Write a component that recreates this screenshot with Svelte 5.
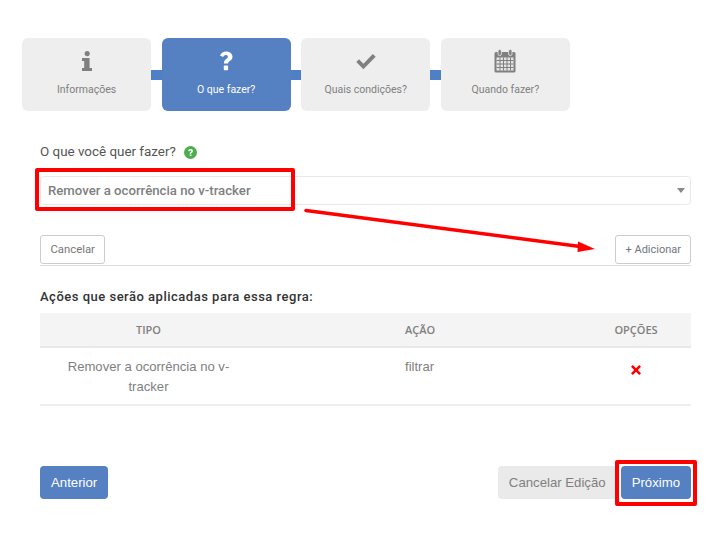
<script>
  const steps = [
    { label: 'Informações', icon: 'info' },
    { label: 'O que fazer?', icon: 'q', active: true },
    { label: 'Quais condições?', icon: 'check' },
    { label: 'Quando fazer?', icon: 'cal' }
  ];
</script>

<div class="page">
  <nav class="steps">
    {#each steps as s, i}
      {#if i > 0}<span class="link"></span>{/if}
      <div class="step" class:active={s.active}>
        <div class="ico">
          {#if s.icon === 'info'}
            <svg width="12" height="20" viewBox="0 0 12 20"><circle cx="6.200" cy="2.600" r="2.600" fill="#808080"/><path d="M1 7h7.600v10H11v3H1v-3h2.200v-7H1z" fill="#808080"/></svg>
          {:else if s.icon === 'q'}
            <svg width="14" height="20" viewBox="0 0 14 20"><path d="M1 4.600C2.200 1.800 4.300.4 7.200.4c3.500 0 6.300 2.200 6.300 5.300 0 2.300-1.300 3.400-2.700 4.400-1.100.8-1.700 1.300-1.700 2.500H4.900c0-2.600 1-3.700 2.300-4.600.9-.6 1.700-1.100 1.700-2.200 0-1-.9-1.700-2-1.700-1.200 0-2 .7-2.700 1.900z" fill="#fff"/><rect x="4.800" y="14.600" width="4.300" height="4.600" rx=".6" fill="#fff"/></svg>
          {:else if s.icon === 'check'}
            <svg width="20" height="17" viewBox="0 0 20 16"><path d="M.3 8.600 3 5.800l4.400 4.400L16.800.4l2.900 2.900L7.400 15.800z" fill="#808080"/></svg>
          {:else}
            <svg width="22" height="24" viewBox="0 0 22 24"><rect x="0.500" y="3" width="21" height="20.500" rx="1.500" fill="#808080"/><rect x="4" y="0.500" width="3.400" height="6" rx="1.500" fill="#808080" stroke="#eee" stroke-width=".8"/><rect x="14.600" y="0.500" width="3.400" height="6" rx="1.500" fill="#808080" stroke="#eee" stroke-width=".8"/><path d="M2.500 8.500h17v13h-17z" fill="#e4e4e4"/><path d="M2.500 11.500h17M2.500 15h17M2.500 18.500h17M6 8.500v13M9.500 8.500v13M13 8.500v13M16.500 8.500v13" stroke="#808080" stroke-width="1"/></svg>
          {/if}
        </div>
        <div class="cap">{s.label}</div>
      </div>
    {/each}
  </nav>

  <section class="form">
    <div class="lbl">
      O que você quer fazer?
      <svg class="help" width="13" height="13" viewBox="0 0 13 13"><circle cx="6.500" cy="6.500" r="6.500" fill="#4cae4c"/><path d="M4.100 5c.2-1.200 1.100-2 2.500-2 1.300 0 2.400.8 2.400 2 0 1-.6 1.400-1.200 1.800-.4.300-.7.500-.7 1H5.700c0-1 .5-1.500 1-1.900.4-.3.700-.5.700-.8 0-.4-.4-.7-.8-.7-.5 0-.8.300-1 .9zM5.700 8.600h1.700v1.500H5.700z" fill="#fff"/></svg>
    </div>
    <div class="select">
      <span>Remover a ocorrência no v-tracker</span>
      <i class="caret"></i>
    </div>
    <div class="actions">
      <button class="btn">Cancelar</button>
      <button class="btn add">+ Adicionar</button>
    </div>
    <h3>Ações que serão aplicadas para essa regra:</h3>
    <table>
      <thead>
        <tr><th class="c1">TIPO</th><th class="c2">AÇÃO</th><th class="c3">OPÇÕES</th></tr>
      </thead>
      <tbody>
        <tr>
          <td class="c1">Remover a ocorrência no v-tracker</td>
          <td class="c2">filtrar</td>
          <td class="c3">
            <svg class="x" width="10" height="10" viewBox="0 0 10 10"><path d="M1.800 0 5 3.200 8.200 0 10 1.800 6.800 5 10 8.200 8.200 10 5 6.800 1.800 10 0 8.200 3.200 5 0 1.800z" fill="#f00"/></svg>
          </td>
        </tr>
      </tbody>
    </table>
    <footer>
      <button class="big primary">Anterior</button>
      <div class="right">
        <button class="big grey">Cancelar Edição</button>
        <button class="big primary">Próximo</button>
      </div>
    </footer>
  </section>

  <div class="mark m1"></div>
  <div class="mark m2"></div>
  <svg class="arrow" width="728" height="544" viewBox="0 0 728 544">
    <path d="M306 210.500 580 246.500" stroke="#f00" stroke-width="3.500" stroke-linecap="round" fill="none"/>
    <path d="M578 241.500 595 249 577.500 252z" fill="#f00"/>
  </svg>
</div>

<style>
  :global(body) { margin: 0; background: #fff; }
  .page { position: relative; width: 728px; height: 544px; overflow: hidden; font-family: Roboto, "Liberation Sans", sans-serif; box-sizing: border-box; padding-top: 38px; }
  .steps { display: flex; align-items: center; margin-left: 22px; }
  .step { width: 129.200px; height: 73px; box-sizing: border-box; background: #eee; border-radius: 6px; text-align: center; color: #808080; font-size: 10.500px; display: flex; flex-direction: column; align-items: center; }
  .step.active { background: #5580c2; color: #fff; }
  .link { width: 10.400px; height: 10px; background: #4f7fc4; }
  .ico { height: 24px; margin-top: 11px; display: flex; align-items: center; justify-content: center; }
  .cap { margin-top: 10px; line-height: 14px; }
  .form { margin: 32px 37px 0 40px; }
  .lbl { font-size: 13.400px; line-height: 18px; color: #555; height: 18px; display: flex; align-items: center; }
  .help { margin-left: 8px; }
  .select { margin-top: 15px; height: 29px; box-sizing: border-box; border: 1px solid #e8e8e8; border-radius: 4px; display: flex; align-items: center; justify-content: space-between; padding: 0 5px 0 7px; font-size: 13.200px; font-weight: 500; color: #808080; }
  .caret { width: 0; height: 0; border-left: 4px solid transparent; border-right: 4px solid transparent; border-top: 5px solid #888; }
  .actions { margin-top: 30px; height: 31px; box-sizing: border-box; border-bottom: 1px solid #ddd; display: flex; justify-content: space-between; align-items: flex-start; }
  .btn { height: 29px; padding: 0 9.500px; box-sizing: border-box; background: #fff; border: 1px solid #ccc; border-radius: 3px; font: 11.300px Roboto, sans-serif; color: #777; }
  .add { padding: 0 9px; font-size: 11px; color: #6f7680; }
  h3 { margin: 22px 0 0; font-size: 13px; line-height: 17px; font-weight: 500; letter-spacing: .5px; color: #333; }
  table { width: 100%; margin-top: 8px; border-collapse: collapse; table-layout: fixed; border-bottom: 2px solid #eee; }
  th { height: 34px; box-sizing: border-box; padding: 0; background: #f4f4f4; border-bottom: 2px solid #e8e8e8; font: 600 11px "Open Sans", sans-serif; color: #808080; }
  td { height: 56px; box-sizing: border-box; padding: 9px 0 7px; vertical-align: top; font: 13.100px/20px "Liberation Sans", sans-serif; color: #808080; }
  .c1 { width: 217px; text-align: center; }
  td.c1 { padding-left: 20px; padding-right: 20px; }
  .c2 { width: 324px; box-sizing: border-box; text-align: left; padding-left: 148px; }
  td.c2 { padding-left: 148px; }
  .c3 { text-align: center; }
  td.c3 { padding-top: 17px; }
  .x { display: inline-block; vertical-align: top; }
  footer { margin-top: 60px; display: flex; justify-content: space-between; align-items: flex-start; }
  .right { display: flex; gap: 4px; }
  .big { height: 33px; border: 0; border-radius: 4px; padding: 0 11px; font: 13.200px "Liberation Sans", sans-serif; }
  .primary { background: #5580c2; color: #fff; }
  .grey { background: #eaeaea; color: #808080; }
  .mark { position: absolute; border: 4px solid #f00; box-sizing: border-box; border-radius: 2px; }
  .m1 { left: 35px; top: 168px; width: 260px; height: 43px; }
  .m2 { left: 615px; top: 460px; width: 82px; height: 46px; }
  .arrow { position: absolute; left: 0; top: 0; pointer-events: none; }
</style>
